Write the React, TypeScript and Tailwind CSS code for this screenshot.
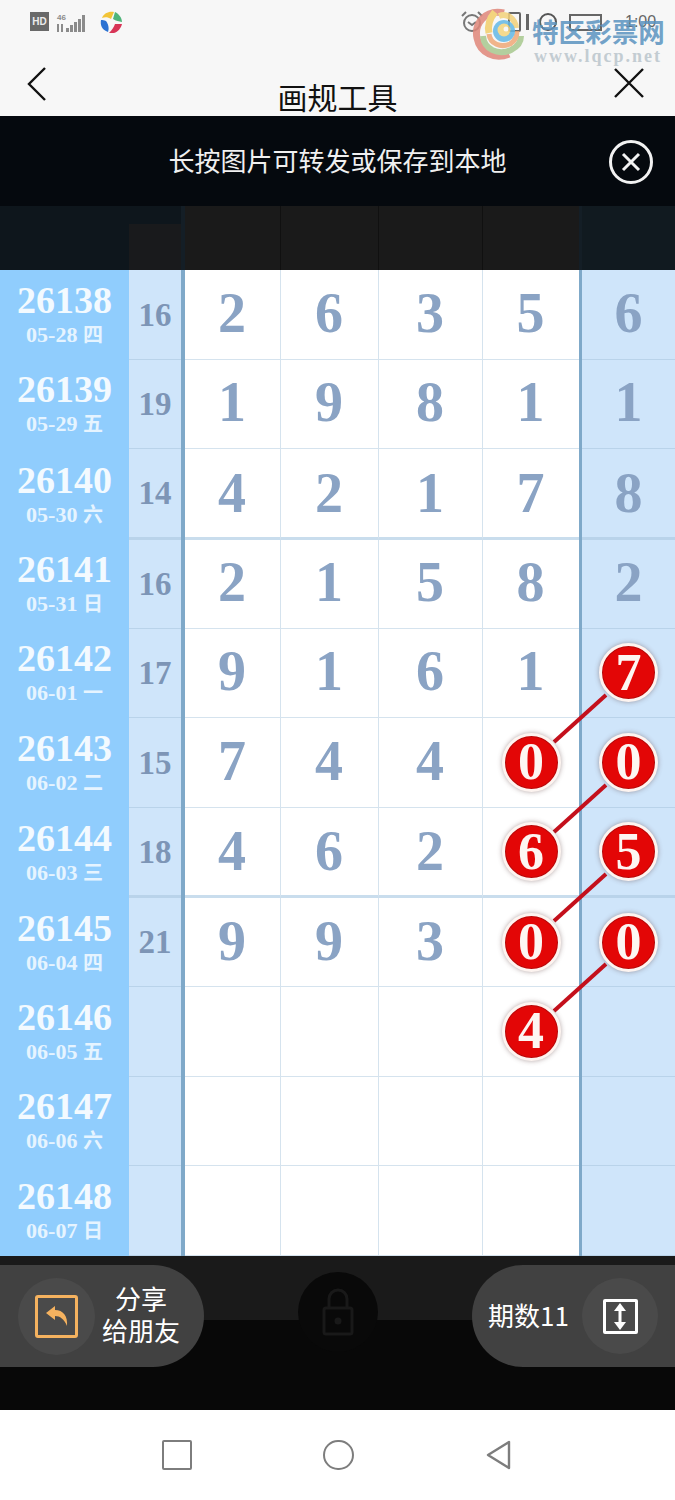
import React from "react";

const serif = "font-['Liberation_Serif',serif]";
const cjk = "font-['Noto_Sans_CJK_SC','Noto_Sans',sans-serif]";

const rows: { id: string; date: string; sum: string; d: string[]; last: string; ball4?: boolean; ball5?: boolean }[] = [
  { id: "26138", date: "05-28 四", sum: "16", d: ["2", "6", "3", "5"], last: "6" },
  { id: "26139", date: "05-29 五", sum: "19", d: ["1", "9", "8", "1"], last: "1" },
  { id: "26140", date: "05-30 六", sum: "14", d: ["4", "2", "1", "7"], last: "8" },
  { id: "26141", date: "05-31 日", sum: "16", d: ["2", "1", "5", "8"], last: "2" },
  { id: "26142", date: "06-01 一", sum: "17", d: ["9", "1", "6", "1"], last: "7", ball5: true },
  { id: "26143", date: "06-02 二", sum: "15", d: ["7", "4", "4", "0"], last: "0", ball4: true, ball5: true },
  { id: "26144", date: "06-03 三", sum: "18", d: ["4", "6", "2", "6"], last: "5", ball4: true, ball5: true },
  { id: "26145", date: "06-04 四", sum: "21", d: ["9", "9", "3", "0"], last: "0", ball4: true, ball5: true },
  { id: "26146", date: "06-05 五", sum: "", d: ["", "", "", "4"], last: "", ball4: true },
  { id: "26147", date: "06-06 六", sum: "", d: ["", "", "", ""], last: "" },
  { id: "26148", date: "06-07 日", sum: "", d: ["", "", "", ""], last: "" },
];

const digitW = ["w-[96px]", "w-[98px]", "w-[104px]", "w-[96px]"];

function Ball({ v }: { v: string }) {
  return (
    <div className={`relative z-10 w-[59px] h-[59px] rounded-full bg-[#e30606] border-[3px] border-[#fdf4f0] shadow-[0_0_5px_rgba(90,60,60,0.45),inset_0_0_0_1px_#b30c0c] flex items-center justify-center text-[#fdf6f2] text-[52px] font-bold leading-none ${serif}`}>
      {v}
    </div>
  );
}

function Row({ r, i }: { r: (typeof rows)[number]; i: number }) {
  const thick = i === 2 || i === 6;
  const afterThick = i === 3 || i === 7;
  const line = thick ? "border-b-[3px] border-[#c9dded]" : "border-b border-[#d5e3ee]";
  const lineBlue = thick ? "border-b-[3px] border-[#b9d3ea]" : "border-b border-[#b9d3ea]";
  const digit = `text-[#8aa3c4] text-[56px] font-bold leading-none ${serif}`;
  return (
    <div className={`flex ${thick ? "h-[90.64px]" : afterThick ? "h-[88.64px]" : "h-[89.64px]"}`}>
      <div className={`w-[129px] shrink-0 bg-[#90cdfd] flex flex-col items-center justify-center text-[#f3faff] font-bold ${serif}`}>
        <div className="text-[38px] leading-[38px] mt-[-2px]">{r.id}</div>
        <div className="text-[22px] leading-[24px] mt-[3px] text-[#e6f4ff] whitespace-nowrap">
          {r.date.slice(0, 5)} <span className="text-[20px] font-bold font-['Noto_Sans_CJK_SC',sans-serif]">{r.date.slice(6)}</span>
        </div>
      </div>
      <div className={`w-[52px] shrink-0 bg-[#cfe5fa] ${lineBlue} flex items-center justify-center pt-[2px] text-[#7d95b6] text-[33px] font-bold ${serif}`}>
        {r.sum}
      </div>
      <div className="w-[4px] shrink-0 bg-[#7fa9c9]" />
      {r.d.map((v, j) => (
        <div key={j} className={`${digitW[j]} shrink-0 bg-white ${line} ${j < 3 ? "border-r border-r-[#d5e3ee]" : ""} flex items-center justify-center ${digit}`}>
          {j === 3 && r.ball4 ? <Ball v={v} /> : <span className={thick ? "mb-[1px] mr-[1px]" : "mb-[3px] mr-[1px]"}>{v}</span>}
        </div>
      ))}
      <div className="w-[3px] shrink-0 bg-[#7fa9c9]" />
      <div className={`flex-1 bg-[#cfe5fa] ${lineBlue} flex items-center justify-center ${digit}`}>
        {r.ball5 ? <Ball v={r.last} /> : <span className={thick ? "mb-[1px]" : "mb-[3px]"}>{r.last}</span>}
      </div>
    </div>
  );
}

function Logo() {
  return (
    <svg width="56" height="56" viewBox="0 0 56 56" fill="none" className="opacity-85">
      <path d="M33 7 C14 3 3 18 6 32 C9 47 24 54 38 48" stroke="#e0877a" strokeWidth="7" />
      <path d="M12 30 C13 43 27 50 40 44 C46 41 50 36 50 30" stroke="#a8c98f" strokeWidth="6" />
      <path d="M18 28 C19 38 30 42 39 38 C44 35 46 31 46 25" stroke="#f0a977" strokeWidth="5" />
      <path d="M24 6 C19 12 16 18 18 27" stroke="#f3cf6a" strokeWidth="7" />
      <path d="M28 10 C36 7 44 12 45 22" stroke="#f3d27a" strokeWidth="6" />
      <circle cx="33" cy="25" r="11" fill="#62b8e6" />
      <circle cx="33" cy="24" r="6.5" fill="#f4d57e" />
      <circle cx="35" cy="23" r="2.5" fill="#f7f7f7" />
    </svg>
  );
}

export default function App() {
  return (
    <div className={`w-[675px] h-[1500px] overflow-hidden bg-white flex flex-col ${cjk}`}>
      {/* status + title */}
      <div className="relative h-[116px] shrink-0 bg-[#f7f7f7]">
        <div className="flex items-start gap-[7px] pl-[30px] pt-[10px]">
          <div className="mt-[2px] w-[19px] h-[19px] bg-[#696969] text-[#ececec] text-[10px] font-bold flex items-center justify-center font-['Liberation_Sans',sans-serif]">HD</div>
          <svg className="mt-[2px]" width="32" height="22" viewBox="0 0 32 22" fill="#8b8b8b">
            <text x="1" y="8" fontSize="8" fontWeight="700" fontFamily="Liberation Sans">46</text>
            <rect x="1" y="12" width="2" height="8" /><rect x="5" y="12" width="2" height="8" />
            <rect x="10" y="16" width="3" height="4" /><rect x="14" y="13" width="3" height="7" /><rect x="18" y="10" width="3" height="10" /><rect x="22" y="7" width="3" height="13" /><rect x="26" y="3" width="3" height="17" />
          </svg>
          <svg className="ml-[4px]" width="24" height="24" viewBox="0 0 24 24">
            <path d="M3 8 C5 3 10 1 15 2 L12 9 C9 7 6 7 3 8Z" fill="#f2c437" />
            <path d="M16 2 C20 4 23 8 23 12 C20 11 17 11 14 9Z" fill="#4fb57a" />
            <path d="M23 14 C22 18 19 22 15 23 L10 23 C13 20 15 17 16 14Z" fill="#d83557" />
            <path d="M2 10 C1 15 3 20 9 22 C10 19 10 15 7 11 C5 10 4 10 2 10Z" fill="#2c72d2" />
          </svg>
        </div>
        {/* status icons, partly under the watermark */}
        <div className="absolute left-[460px] top-[10px] flex items-center gap-[5px] text-[#666] text-[16px]">
          <svg width="24" height="24" viewBox="0 0 24 24" fill="none" stroke="#777" strokeWidth="2">
            <circle cx="12" cy="13" r="8" /><path d="M8 12l4 3 4-3M2 6l4-4M22 6l-4-4" />
          </svg>
          <div className="w-[14px]" />
          <div className="w-[13px] h-[20px] border-2 border-[#666] rounded-[2px]" />
          <div className="w-[3px] h-[16px] bg-[#666]" />
          <div className="ml-[5px] w-[18px] h-[18px] rounded-full border-2 border-[#555]" />
          <div className="ml-[7px] w-[33px] h-[17px] border-2 border-[#666]" />
          <span className="ml-[18px] font-['Liberation_Sans',sans-serif]">1:00</span>
        </div>
        <div className="absolute left-[471px] top-[6px]"><Logo /></div>
        <div className="absolute left-[532px] top-[14px] text-[#5a93c0]/85 text-[26.6px] leading-[34px] font-bold whitespace-nowrap">特区彩票网</div>
        <div className={`absolute left-[534px] top-[46px] text-[#c3ccd2] text-[18px] leading-[20px] tracking-[2px] font-bold ${serif}`}>www.lqcp.net</div>
        {/* back */}
        <svg className="absolute left-[26px] top-[66px]" width="22" height="36" viewBox="0 0 22 36" fill="none" stroke="#111" strokeWidth="2.4">
          <path d="M19 2L3 18l16 16" />
        </svg>
        <svg className="absolute left-[613px] top-[68px]" width="32" height="30" viewBox="0 0 32 30" fill="none" stroke="#111" strokeWidth="2.4">
          <path d="M2 1l28 28M30 1L2 29" />
        </svg>
        <div className="absolute inset-x-0 top-[78px] text-center text-[30px] leading-[36px] text-[#111]">画规工具</div>
      </div>

      {/* banner */}
      <div className="h-[90px] shrink-0 bg-[#05090e] flex items-center justify-center relative">
        <span className="text-[26px] leading-[32px] text-[#f0f0f0] mb-[2px]">长按图片可转发或保存到本地</span>
        <svg className="absolute left-[606px] top-[22px]" width="48" height="48" viewBox="0 0 48 48" fill="none" stroke="#f2f2f2" strokeWidth="3">
          <circle cx="25" cy="24" r="20.5" /><path d="M17 16l16 16M33 16L17 32" />
        </svg>
      </div>

      {/* dimmed table header */}
      <div className="h-[64px] shrink-0 bg-[#0e161c] flex">
        <div className="w-[129px]" />
        <div className="w-[52px] mt-[18px] bg-[#191a1c]" />
        <div className="w-[4px] bg-[#141e26]" />
        <div className="w-[394px] bg-[#1a1a1a] flex">
          <div className="w-[96px] border-r border-[#101010]" />
          <div className="w-[98px] border-r border-[#101010]" />
          <div className="w-[104px] border-r border-[#101010]" />
        </div>
        <div className="w-[3px] bg-[#141e26]" />
        <div className="flex-1 bg-[#111a20]" />
      </div>

      {/* table */}
      <div className="relative h-[986px] shrink-0">
        {rows.map((r, i) => (
          <Row key={r.id} r={r} i={i} />
        ))}
        <svg className="absolute inset-0 z-0 pointer-events-none" width="675" height="986" viewBox="0 0 675 986" fill="none" stroke="#c4101c" strokeWidth="4">
          <path d="M606 425L554 472" />
          <path d="M606 515L554 562" />
          <path d="M606 604L554 651" />
          <path d="M606 694L554 741" />
        </svg>
      </div>

      {/* bottom */}
      <div className="h-[154px] shrink-0 bg-[linear-gradient(#1a1a1a_0,#1a1a1a_64px,#080808_64px)] pt-[9px]">
        <div className="flex justify-between items-start">
          <div className="w-[204px] h-[102px] rounded-r-[51px] bg-[#414141] flex items-center pl-[18px]">
            <div className="w-[77px] h-[77px] rounded-full bg-[#4a4a4a] flex items-center justify-center">
              <div className="w-[43px] h-[43px] rounded-[3px] border-[3px] border-[#f5b25f] flex items-center justify-center">
                <svg width="26" height="24" viewBox="0 0 26 24" fill="#f5b25f">
                  <path d="M11 2L2 9l9 7v-4c5 0 9 3 12 10 1-10-4-16-12-16z" />
                </svg>
              </div>
            </div>
            <div className="ml-[7px] mb-[5px] w-[78px] text-center text-[26px] leading-[32px] text-white">分享<br />给朋友</div>
          </div>
          <div className="mt-[7px] w-[80px] h-[80px] rounded-full bg-[#090909] flex items-center justify-center">
            <svg width="32" height="48" viewBox="0 0 32 48" fill="none" stroke="#191919" strokeWidth="3">
              <rect x="2" y="20" width="28" height="26" rx="2" /><path d="M7 20V11a9 9 0 0 1 18 0v9" /><circle cx="16" cy="33" r="2" fill="#1e1e1e" />
            </svg>
          </div>
          <div className="w-[203px] h-[102px] rounded-l-[51px] bg-[#414141] flex items-center pl-[16px]">
            <span className="text-[26px] leading-[32px] text-white whitespace-nowrap w-[84px] mb-[3px]">期数11</span>
            <div className="ml-[10px] w-[76px] h-[76px] rounded-full bg-[#4a4a4a] flex items-center justify-center">
              <div className="w-[35px] h-[35px] rounded-[2px] border-[3px] border-white flex items-center justify-center">
                <svg width="14" height="27" viewBox="0 0 14 27" fill="white">
                  <path d="M7 0l6 8H8.500v11H13l-6 8-6-8h4.500V8H1z" />
                </svg>
              </div>
            </div>
          </div>
        </div>
      </div>

      {/* nav */}
      <div className="flex-1 bg-white flex items-center justify-center gap-[131px] pr-[2px] pb-[1px]">
        <div className="w-[30px] h-[30px] rounded-[2px] border-2 border-[#7d7d7d]" />
        <div className="w-[31px] h-[30px] rounded-full border-2 border-[#7d7d7d]" />
        <svg width="26" height="30" viewBox="0 0 26 30" fill="none" stroke="#7d7d7d" strokeWidth="2.4" strokeLinejoin="round">
          <path d="M24 2v26L3 15z" />
        </svg>
      </div>
    </div>
  );
}
